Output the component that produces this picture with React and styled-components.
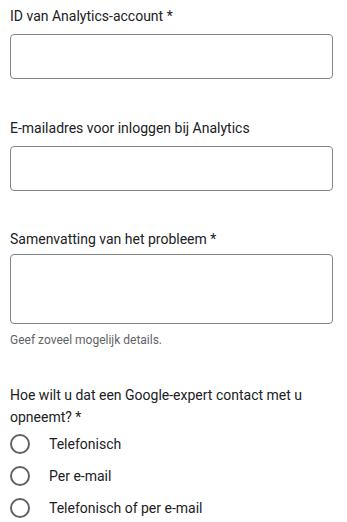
import React from 'react';
import styled, {createGlobalStyle} from 'styled-components';

const GlobalStyle = createGlobalStyle`
  html, body {
    margin: 0;
    padding: 0;
    background: #fff;
  }
  body {
    font-family: Roboto, "Noto Sans", Arial, sans-serif;
    color: #202124;
  }
`;

const Form = styled.form`
  padding: 6px 14px 0 10px;
`;

const Field = styled.div`
  display: flex;
  flex-direction: column;
  margin-bottom: ${({$gap}) => $gap || 39}px;
`;

const Label = styled.label`
  font-size: 14px;
  line-height: 20px;
  color: #202124;
  margin-bottom: ${({$space}) => $space || 8}px;
`;

const TextInput = styled.input`
  box-sizing: border-box;
  height: 45px;
  width: 100%;
  border: 1px solid #80868b;
  border-radius: 4px;
  padding: 0 12px;
  font: inherit;
  outline: none;
  background: #fff;
`;

const TextArea = styled.textarea`
  box-sizing: border-box;
  height: 70px;
  width: 100%;
  border: 1px solid #80868b;
  border-radius: 4px;
  padding: 10px 12px;
  font: inherit;
  resize: none;
  outline: none;
  display: block;
`;

const Helper = styled.div`
  font-size: 12px;
  line-height: 16px;
  color: #5f6368;
  margin-top: 8px;
`;

const Question = styled.div`
  font-size: 14px;
  line-height: 22px;
  color: #202124;
`;

const Options = styled.div`
  display: flex;
  flex-direction: column;
`;

const Option = styled.label`
  display: flex;
  align-items: center;
  height: 32px;
  gap: 19px;
  font-size: 14px;
  color: #202124;
  cursor: pointer;
`;

const Circle = styled.span`
  box-sizing: border-box;
  width: 20px;
  height: 20px;
  border: 2px solid #5f6368;
  border-radius: 50%;
  flex: none;
`;

const HiddenRadio = styled.input`
  display: none;
`;

const options = ['Telefonisch', 'Per e-mail', 'Telefonisch of per e-mail'];

function App() {
  return (
    <>
      <GlobalStyle />
      <Form>
        <Field>
          <Label>ID van Analytics-account *</Label>
          <TextInput type="text" />
        </Field>
        <Field $gap={38}>
          <Label>E-mailadres voor inloggen bij Analytics</Label>
          <TextInput type="email" />
        </Field>
        <Field $gap={36}>
          <Label $space={5}>Samenvatting van het probleem *</Label>
          <TextArea />
          <Helper>Geef zoveel mogelijk details.</Helper>
        </Field>
        <Question>Hoe wilt u dat een Google-expert contact met u opneemt? *</Question>
        <Options>
          {options.map((o) => (
            <Option key={o}>
              <HiddenRadio type="radio" name="contact" />
              <Circle />
              {o}
            </Option>
          ))}
        </Options>
      </Form>
    </>
  );
}

export default App;
